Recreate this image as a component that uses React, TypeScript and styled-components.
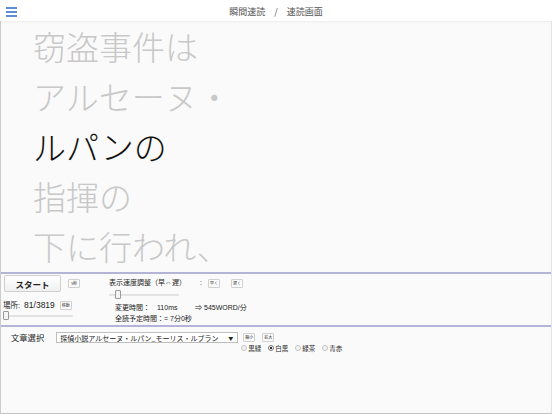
import React from "react";
import styled, { createGlobalStyle } from "styled-components";

const GlobalStyle = createGlobalStyle`
  html, body {
    margin: 0;
    padding: 0;
    background: #ffffff;
  }
  body {
    font-family: "Liberation Sans", "Noto Sans CJK JP", sans-serif;
  }
  * {
    box-sizing: border-box;
  }
`;

const Page = styled.div`
  width: 552px;
  height: 414px;
  display: flex;
  flex-direction: column;
  overflow: hidden;
  background: #fafafa;
`;

const Header = styled.header`
  position: relative;
  z-index: 1;
  height: 21px;
  flex: none;
  display: flex;
  align-items: center;
  justify-content: center;
  padding-top: 2px;
  background: #ffffff;
  box-shadow: 0 1px 2px rgba(0, 0, 0, 0.06);
`;

const Burger = styled.button`
  position: absolute;
  left: 6px;
  top: 7px;
  width: 11px;
  height: 10px;
  padding: 0;
  border: 0;
  background: transparent;
  display: flex;
  flex-direction: column;
  justify-content: space-between;

  span {
    display: block;
    height: 2px;
    background: #5b8fd2;
  }
`;

const Title = styled.h1`
  margin: 0;
  font-size: 9px;
  font-weight: normal;
  color: #555555;
  font-family: "Noto Sans CJK JP", sans-serif;
`;

const Body = styled.main`
  flex: 1;
  display: flex;
  flex-direction: column;
  border-left: 1px solid #cccccc;
  border-right: 1px solid #e4e4e4;
  border-bottom: 1px solid #c4c4c4;
  background: #fafafa;
`;

const Reader = styled.section`
  height: 251px;
  flex: none;
  overflow: hidden;
  padding-left: 32px;
  font-family: "Noto Sans CJK JP", sans-serif;
  font-size: 33px;
  line-height: 50px;
  font-weight: 300;
`;

const Line = styled.div<{ $active?: boolean }>`
  color: ${({ $active }) => ($active ? "#111111" : "#c8c8c8")};
  white-space: nowrap;
`;

const Panel = styled.section`
  border-top: 2px solid #b4b4d6;
  display: flex;
  font-family: "Liberation Sans", "Noto Sans CJK JP", sans-serif;
  color: #222222;
`;

const SpeedPanel = styled(Panel)`
  height: 53px;
  flex: none;
  padding-top: 1px;
`;

const FilePanel = styled(Panel)`
  flex: 1;
  padding: 4px 0 0 10px;
  align-items: flex-start;
`;

const LeftCol = styled.div`
  width: 108px;
  flex: none;
  display: flex;
  flex-direction: column;
`;

const RightCol = styled.div`
  display: flex;
  flex-direction: column;
  padding-top: 4px;
`;

const Row = styled.div<{ $gap?: number }>`
  display: flex;
  align-items: center;
  gap: ${({ $gap }) => $gap ?? 0}px;
`;

const StartButton = styled.button`
  width: 57px;
  height: 17px;
  margin-left: 3px;
  padding: 0;
  border: 1px solid #cfcfcf;
  border-radius: 2px;
  background: linear-gradient(#ffffff, #f0f0f0);
  font-family: "Noto Sans CJK JP", sans-serif;
  font-weight: bold;
  font-size: 8.5px;
  color: #222222;
`;

const MiniButton = styled.button`
  width: 12px;
  height: 9px;
  padding: 0;
  border: 1px solid #d0d0d0;
  border-radius: 1px;
  background: #fbfbfb;
  font-family: "Noto Sans CJK JP", sans-serif;
  font-size: 4px;
  line-height: 7px;
  color: #333333;
  white-space: nowrap;
  overflow: hidden;
`;

const Label = styled.span<{ $size?: number }>`
  font-size: ${({ $size }) => $size ?? 7}px;
  line-height: 1.2;
  white-space: nowrap;
  font-family: "Liberation Sans", "Noto Sans CJK JP", sans-serif;
`;

const Range = styled.input.attrs({ type: "range" })<{ $width: number }>`
  -webkit-appearance: none;
  appearance: none;
  width: ${({ $width }) => $width}px;
  height: 9px;
  margin: 0;
  padding: 0;
  background: transparent;

  &::-webkit-slider-runnable-track {
    height: 2px;
    background: #e2e2e2;
    border-radius: 1px;
  }
  &::-webkit-slider-thumb {
    -webkit-appearance: none;
    width: 6px;
    height: 9px;
    margin-top: -3.5px;
    border: 1px solid #9a9a9a;
    border-radius: 1px;
    background: #f4f4f4;
  }
`;

const Place = styled(Row)`
  margin-top: 8px;
  padding-left: 2px;
`;

const InfoBlock = styled.div`
  display: flex;
  flex-direction: column;
  gap: 3px;
  padding-left: 6px;
  margin-top: 5px;
`;

const SelectBox = styled.div`
  width: 182px;
  height: 11px;
  margin-left: 12px;
  margin-top: 1px;
  padding: 0 4px 0 3px;
  border: 1px solid #bdbdbd;
  background: #ffffff;
  display: flex;
  align-items: center;
  justify-content: space-between;
  font-family: "Noto Sans CJK JP", sans-serif;
  font-size: 7px;
  color: #222222;
  white-space: nowrap;

  i {
    font-style: normal;
    font-size: 5px;
  }
`;

const ThemeCol = styled.div`
  display: flex;
  flex-direction: column;
  gap: 2px;
  margin-left: 3px;
  margin-top: 2px;
`;

const RadioLabel = styled.label`
  display: flex;
  align-items: center;
  gap: 1px;
  font-family: "Noto Sans CJK JP", sans-serif;
  font-size: 6.5px;
  line-height: 8px;
  color: #222222;
`;

const Radio = styled.input.attrs({ type: "radio" })`
  -webkit-appearance: none;
  appearance: none;
  width: 6px;
  height: 6px;
  margin: 0;
  border: 1px solid #c2c2c2;
  border-radius: 50%;
  background: #f4f4f4;

  &:checked {
    border-color: #777777;
    background: radial-gradient(circle, #333333 0 1.3px, #ffffff 1.6px);
  }
`;

const lines = ["窃盗事件は", "アルセーヌ・", "ルパンの", "指揮の", "下に行われ、"];
const themes = ["黒緑", "白黒", "緑茶", "青赤"];

export default function App() {
  return (
    <>
      <GlobalStyle />
      <Page>
        <Header>
          <Burger aria-label="menu">
            <span />
            <span />
            <span />
          </Burger>
          <Title>瞬間速読　/　速読画面</Title>
        </Header>
        <Body>
          <Reader>
            {lines.map((l, i) => (
              <Line key={l} $active={i === 2}>
                {l}
              </Line>
            ))}
          </Reader>

          <SpeedPanel>
            <LeftCol>
              <Row $gap={7}>
                <StartButton>スタート</StartButton>
                <MiniButton>5秒</MiniButton>
              </Row>
              <Place>
                <Label $size={7.5}>場所:</Label>
                <Label $size={8.5} style={{ marginLeft: 4 }}>
                  81/3819
                </Label>
                <MiniButton style={{ marginLeft: 5 }}>移動</MiniButton>
              </Place>
              <Row style={{ paddingLeft: 2, marginTop: 1 }}>
                <Range $width={70} defaultValue={0} min={0} max={3819} />
              </Row>
            </LeftCol>

            <RightCol>
              <Row>
                <Label>表示速度調整（早⇔遅）</Label>
                <Label style={{ marginLeft: 14 }}>:</Label>
                <MiniButton style={{ marginLeft: 6 }}>早く</MiniButton>
                <MiniButton style={{ marginLeft: 11 }}>遅く</MiniButton>
              </Row>
              <Row style={{ marginTop: 2 }}>
                <Range $width={70} defaultValue={10} min={0} max={100} />
              </Row>
              <InfoBlock>
                <Row>
                  <Label style={{ width: 42 }}>変更時間：</Label>
                  <Label style={{ width: 38 }}>110ms</Label>
                  <Label style={{ width: 9 }}>⇒</Label>
                  <Label>545WORD/分</Label>
                </Row>
                <Row>
                  <Label>全読予定時間：= 7分0秒</Label>
                </Row>
              </InfoBlock>
            </RightCol>
          </SpeedPanel>

          <FilePanel>
            <Label $size={8.3} style={{ marginTop: 2, fontFamily: '"Noto Sans CJK JP", sans-serif' }}>
              文章選択
            </Label>
            <SelectBox>
              <span>探偵小説アルセーヌ・ルパン_モーリス・ルブラン</span>
              <i>▼</i>
            </SelectBox>
            <ThemeCol>
              <Row $gap={7} style={{ paddingLeft: 2 }}>
                <MiniButton>縮小</MiniButton>
                <MiniButton>拡大</MiniButton>
              </Row>
              <Row $gap={7}>
                {themes.map((t) => (
                  <RadioLabel key={t}>
                    <Radio name="theme" defaultChecked={t === "白黒"} />
                    {t}
                  </RadioLabel>
                ))}
              </Row>
            </ThemeCol>
          </FilePanel>
        </Body>
      </Page>
    </>
  );
}
